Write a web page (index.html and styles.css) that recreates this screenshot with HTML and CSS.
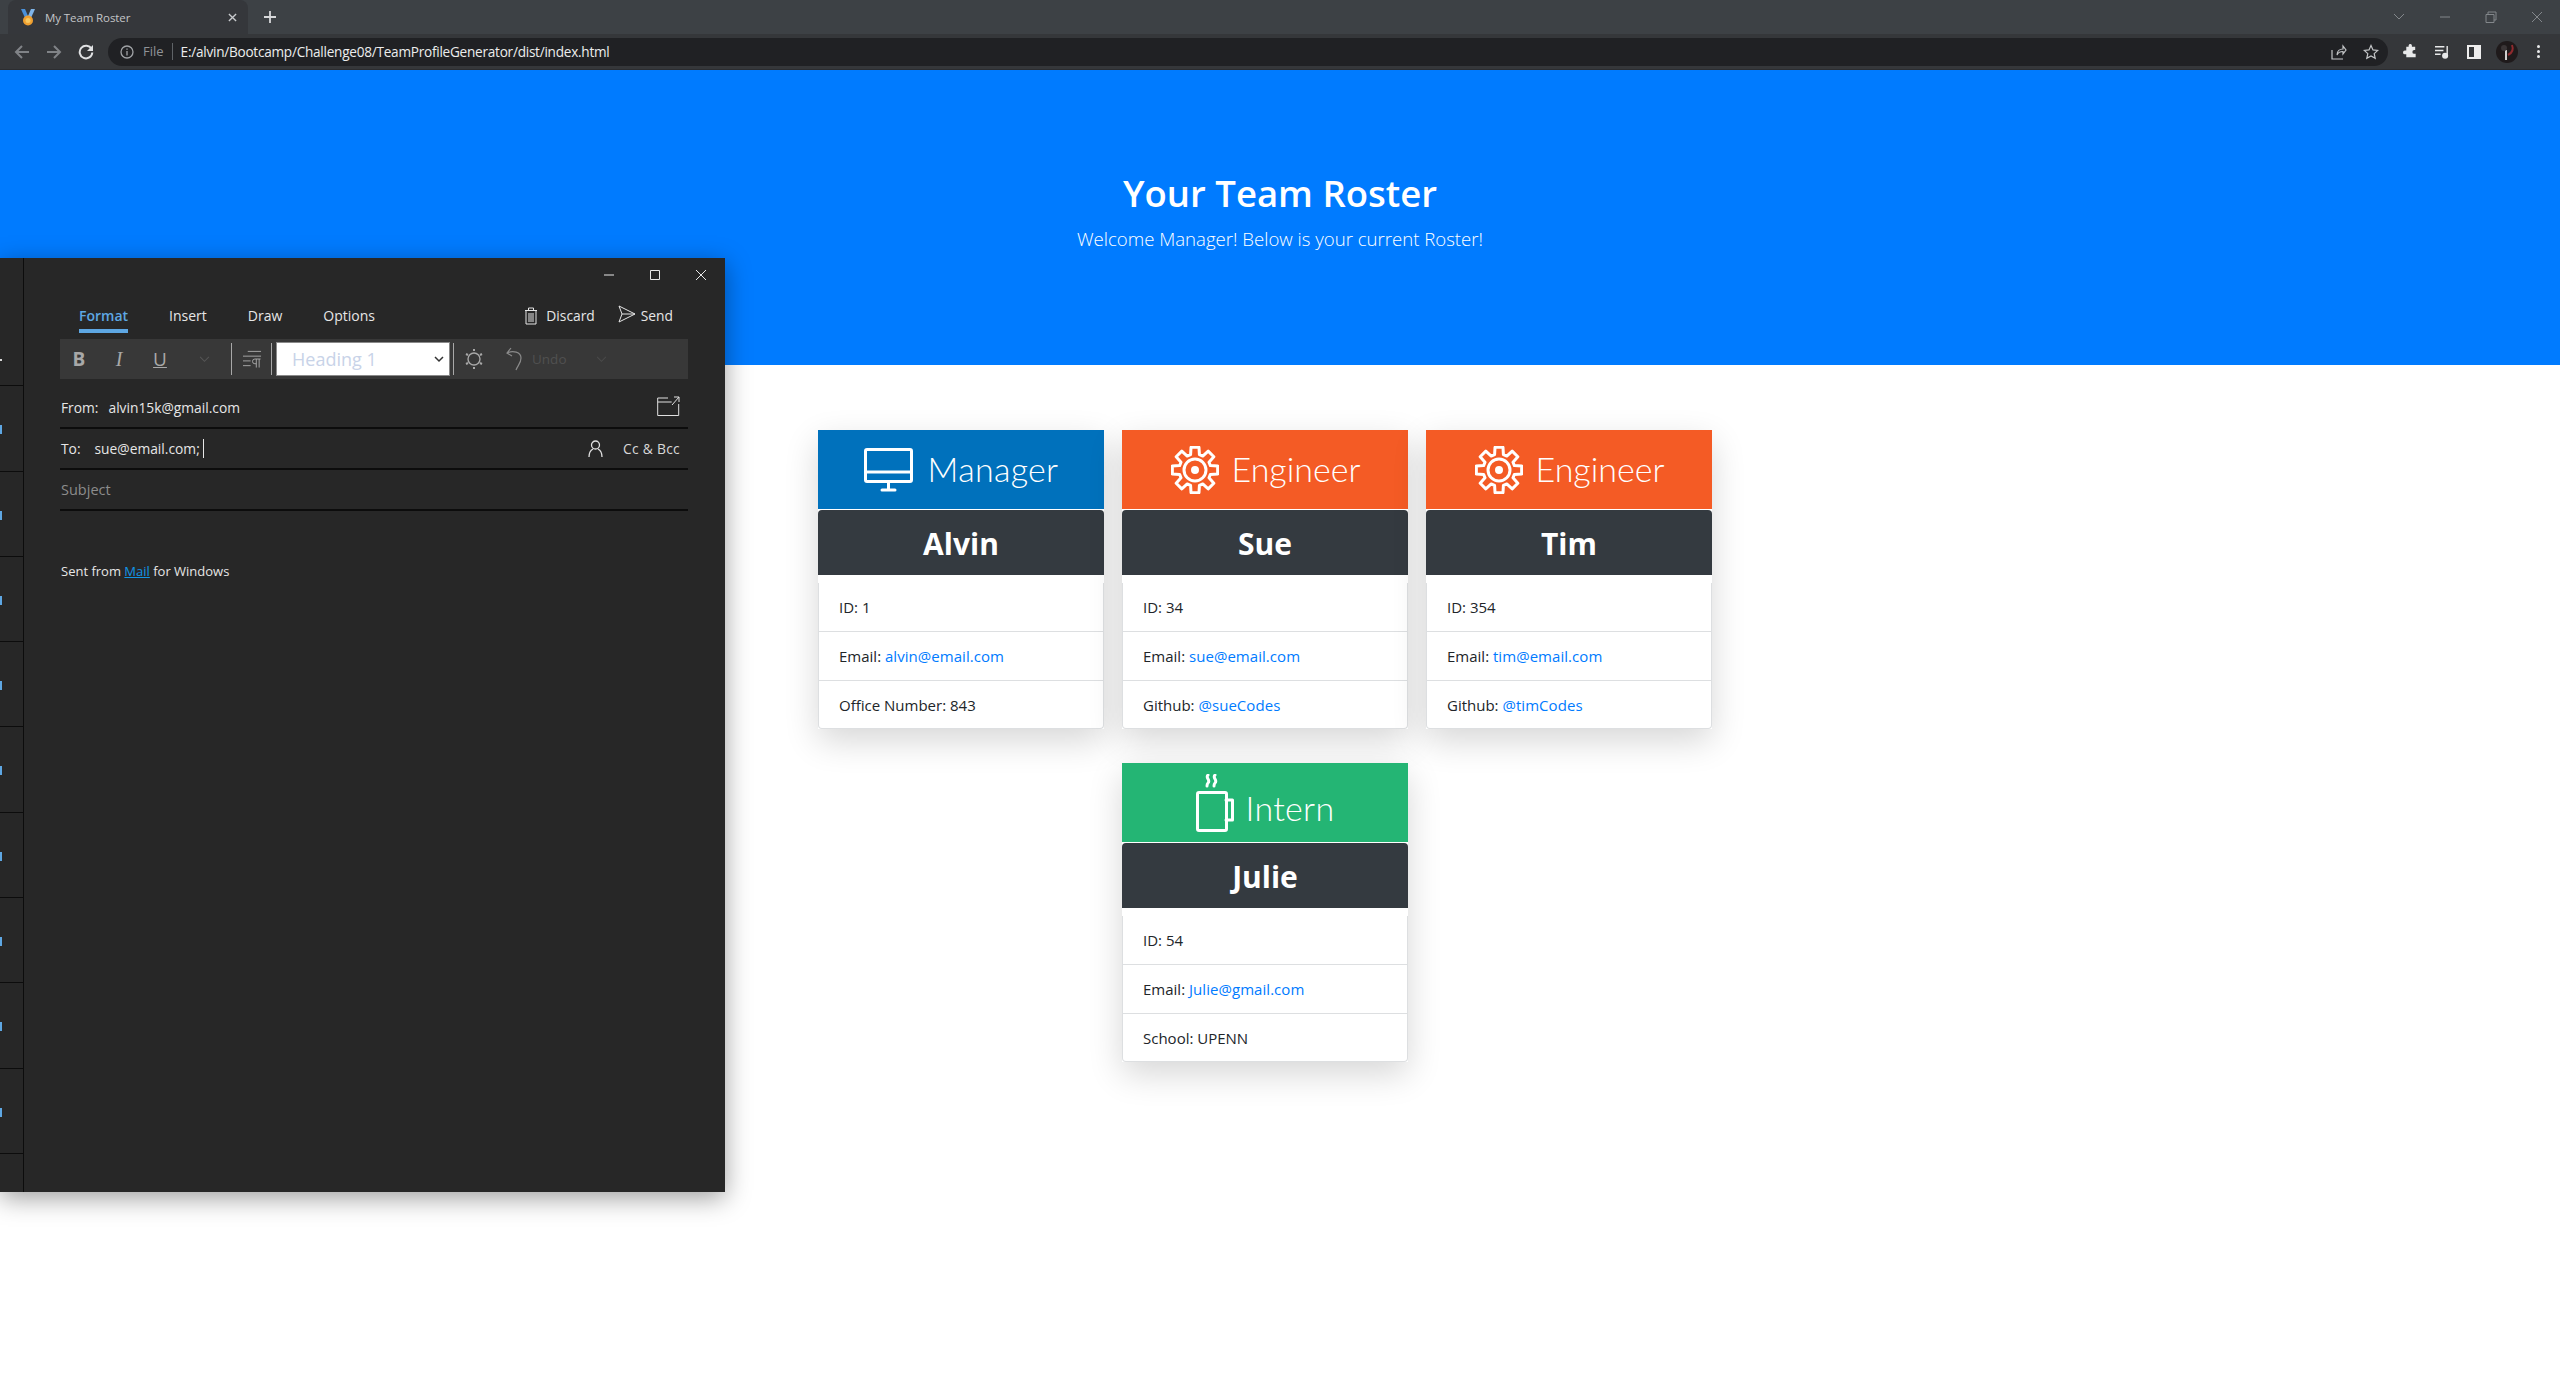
FILE: index.html
```html
<!DOCTYPE html>
<html lang="en">
<head>
    <meta charset="UTF-8">
    <title>My Team Roster</title>
    <link rel="stylesheet" href="styles.css">
</head>
<body>
    <!-- Browser frame -->
    <div class="tabstrip">
        <div class="tab">
            <svg class="favicon" viewBox="0 0 16 17"><path d="M1 0h4l3 7-3 2z" fill="#4a90d9"/><path d="M15 0h-4L8 7l3 2z" fill="#7fb4e8"/><circle cx="8" cy="11.5" r="5" fill="#f0a030"/><circle cx="8" cy="11.5" r="2.5" fill="#f8c860"/></svg>
            <span class="tab-title">My Team Roster</span>
            <svg class="tab-close" viewBox="0 0 10 10"><path d="M1 1l8 8M9 1l-8 8"/></svg>
        </div>
        <svg class="tab-new" viewBox="0 0 12 12"><path d="M6 0v12M0 6h12"/></svg>
        <div class="winctl">
            <svg viewBox="0 0 12 8"><path d="M1 1l5 5 5-5"/></svg>
            <svg viewBox="0 0 12 12"><path d="M1 6h10"/></svg>
            <svg viewBox="0 0 12 12"><path d="M1 3.500h8v8H1zM3 3.500V1h8v8H9"/></svg>
            <svg viewBox="0 0 12 12"><path d="M1 1l10 10M11 1L1 11"/></svg>
        </div>
    </div>
    <div class="toolbar">
        <svg class="nav nav-off" viewBox="0 0 16 16"><path d="M15 8H2M8 2L2 8l6 6"/></svg>
        <svg class="nav nav-off" viewBox="0 0 16 16"><path d="M1 8h13M8 2l6 6-6 6"/></svg>
        <svg class="nav" viewBox="0 0 16 16"><path d="M13.500 5A6.300 6.300 0 1 0 14.300 8.500"/><path class="nav-fill" d="M15 1v6H9z"/></svg>
        <div class="omnibox">
            <svg class="info" viewBox="0 0 14 14"><circle cx="7" cy="7" r="6"/><path d="M7 6v4.500M7 3.500v1.200"/></svg>
            <span class="scheme">File</span>
            <span class="url">E:/alvin/Bootcamp/Challenge08/TeamProfileGenerator/dist/index.html</span>
            <svg class="omni-icon omni-share" viewBox="0 0 16 16"><path d="M1 6v9h11M6 11c0-4 3-6 6-6V2l3 4-3 4V7.500c-3 0-5 1-6 3.500z"/></svg>
            <svg class="omni-icon" viewBox="0 0 16 16"><path d="M8 1.500l2 4.400 4.700.5-3.500 3.200 1 4.700L8 12l-4.200 2.300 1-4.700L1.300 6.400 6 5.900z"/></svg>
        </div>
        <svg class="ext" viewBox="0 0 16 16"><path d="M6 1.500a1.800 1.800 0 0 1 3.500 0V3H13v3.500h-1a2 2 0 0 0 0 4h1.500V14H3.500v-3H2a2 2 0 0 1 0-4h1.500V3H6z"/></svg>
        <svg class="ext ext-queue" viewBox="0 0 16 16"><path d="M0 3h10M0 7h9M0 11h6"/><path d="M13 2v10"/><circle class="ext-dot" cx="10.800" cy="12.500" r="2.500"/></svg>
        <div class="panel-btn"><span></span></div>
        <svg class="avatar" viewBox="0 0 22 22"><circle cx="11" cy="11" r="11" fill="#1f1a1b"/><path d="M16 4c2 5 0 8-4 10" stroke="#8f2a2e" stroke-width="2"/><path d="M9 9h2v10H9z" fill="#cfcfcf"/><circle cx="8" cy="7" r="3" fill="#3a3536"/></svg>
        <div class="kebab"><i></i><i></i><i></i></div>
    </div>

    <!-- Page -->
    <header class="hero">
        <h1>Your Team Roster</h1>
        <p>Welcome Manager! Below is your current Roster!</p>
    </header>

    <section class="roster">
        <article class="card">
            <div class="role role-manager">
                <svg class="role-icon" width="49" height="44" viewBox="0 0 49 44"><rect x="1.500" y="1.500" width="46" height="32" rx="1.500"/><path d="M2 24h45M24.500 34v8M18 42h13"/></svg>
                <span>Manager</span>
            </div>
            <h2>Alvin</h2>
            <ul class="facts">
                <li>ID: 1</li>
                <li>Email: <a href="#">alvin@email.com</a></li>
                <li>Office Number: 843</li>
            </ul>
        </article>
        <article class="card">
            <div class="role role-engineer">
                <svg class="role-icon" width="48" height="48" viewBox="-24 -24 48 48"><use href="#gear"/></svg>
                <span>Engineer</span>
            </div>
            <h2>Sue</h2>
            <ul class="facts">
                <li>ID: 34</li>
                <li>Email: <a href="#">sue@email.com</a></li>
                <li>Github: <a href="#">@sueCodes</a></li>
            </ul>
        </article>
        <article class="card">
            <div class="role role-engineer">
                <svg class="role-icon" width="48" height="48" viewBox="-24 -24 48 48"><use href="#gear"/></svg>
                <span>Engineer</span>
            </div>
            <h2>Tim</h2>
            <ul class="facts">
                <li>ID: 354</li>
                <li>Email: <a href="#">tim@email.com</a></li>
                <li>Github: <a href="#">@timCodes</a></li>
            </ul>
        </article>
        <article class="card">
            <div class="role role-intern">
                <svg class="role-icon" width="38" height="58" viewBox="0 0 38 58"><rect x="1.500" y="18.500" width="29" height="38" rx="1.500"/><path d="M30 26h6.500v20H30M12 1c-3 3 3 5 0 8-1 1-1 2-1 3M19 1c-3 3 3 5 0 8-1 1-1 2-1 3"/></svg>
                <span class="role-low">Intern</span>
            </div>
            <h2>Julie</h2>
            <ul class="facts">
                <li>ID: 54</li>
                <li>Email: <a href="#">Julie@gmail.com</a></li>
                <li>School: UPENN</li>
            </ul>
        </article>
    </section>

    <svg class="defs" width="0" height="0">
        <g id="gear">
            <polygon points="-4.41,-15.38 -3.99,-22.65 3.99,-22.65 4.41,-15.38 7.76,-13.99 13.19,-18.84 18.84,-13.19 13.99,-7.76 15.38,-4.41 22.65,-3.99 22.65,3.99 15.38,4.41 13.99,7.76 18.84,13.19 13.19,18.84 7.76,13.99 4.41,15.38 3.99,22.65 -3.99,22.65 -4.41,15.38 -7.76,13.99 -13.19,18.84 -18.84,13.19 -13.99,7.76 -15.38,4.41 -22.65,3.99 -22.65,-3.99 -15.38,-4.41 -13.99,-7.76 -18.84,-13.19 -13.19,-18.84 -7.76,-13.99"/>
            <circle r="11"/>
            <circle r="2.500" fill="#fff"/>
        </g>
    </svg>

    <!-- Mail compose window floating over the page -->
    <div class="mail">
        <div class="mail-list">
            <div class="mail-item"><i class="mail-dot"></i></div>
            <div class="mail-item"><i class="mail-mark"></i></div>
            <div class="mail-item"><i class="mail-mark"></i></div>
            <div class="mail-item"><i class="mail-mark"></i></div>
            <div class="mail-item"><i class="mail-mark"></i></div>
            <div class="mail-item"><i class="mail-mark"></i></div>
            <div class="mail-item"><i class="mail-mark"></i></div>
            <div class="mail-item"><i class="mail-mark"></i></div>
            <div class="mail-item"><i class="mail-mark"></i></div>
            <div class="mail-item"><i class="mail-mark"></i></div>
            <div class="mail-item"><i class="mail-mark"></i></div>
        </div>
        <div class="compose">
            <div class="mail-title">
                <svg viewBox="0 0 12 12"><path d="M1 6h10"/></svg>
                <svg viewBox="0 0 12 12"><path d="M1.500 1.500h9v9h-9z"/></svg>
                <svg viewBox="0 0 12 12"><path d="M1 1l10 10M11 1L1 11"/></svg>
            </div>
            <nav class="mail-tabs">
                <a class="mail-tab active" href="#">Format</a>
                <a class="mail-tab" href="#">Insert</a>
                <a class="mail-tab" href="#">Draw</a>
                <a class="mail-tab" href="#">Options</a>
                <span class="mail-action mail-action-first">
                    <svg viewBox="0 0 14 18"><path d="M1 3.500h12M4.500 3.500V1h5v2.500M2 3.500h10v13.500H2zM5 6v9M7 6v9M9 6v9"/></svg>
                    Discard
                </span>
                <span class="mail-action">
                    <svg viewBox="0 0 18 18"><path d="M1 1l16 8-16 8 3-8zM4 9h13"/></svg>
                    Send
                </span>
            </nav>
            <div class="format-bar">
                <span class="fmt fmt-b">B</span>
                <span class="fmt fmt-i">I</span>
                <span class="fmt fmt-u">U</span>
                <svg class="fmt-chev" viewBox="0 0 12 8"><path d="M1 1l5 5 5-5"/></svg>
                <i class="fmt-sep fmt-sep-a"></i>
                <svg class="fmt-para" viewBox="0 0 20 20"><path d="M5 2h14M0 7h19M0 12h8M0 17h8M14 10v9M17 10v9M18.500 10h-6a2.500 2.500 0 0 0 0 5h1.500"/></svg>
                <i class="fmt-sep fmt-sep-b"></i>
                <div class="heading-select">
                    <span>Heading 1</span>
                    <svg viewBox="0 0 10 7"><path d="M1 1l4 4 4-4"/></svg>
                </div>
                <i class="fmt-sep fmt-sep-c"></i>
                <svg class="fmt-sun" viewBox="0 0 18 20"><circle cx="9" cy="10" r="6"/><path d="M9 0v2M9 18v2M1 5l2 1M15 14l2 1M1 15l2-1M15 6l2-1" stroke-width="2"/></svg>
                <svg class="fmt-undo" viewBox="0 0 16 24"><path d="M5 1L1 6l5 3M1 6c6-3 14-1 14 5 0 5-3 7-5 12"/></svg>
                <span class="fmt-undo-label">Undo</span>
                <svg class="fmt-chev fmt-chev-undo" viewBox="0 0 12 8"><path d="M1 1l5 5 5-5"/></svg>
            </div>
            <div class="field field-from">
                <span class="field-label">From:</span>
                <span class="field-value">alvin15k@gmail.com</span>
                <svg class="popout" viewBox="0 0 23 20"><path d="M11 2H.700v17.500h21V8M.700 6h14M15 9l7-8M17 1h5v5"/></svg>
            </div>
            <div class="field field-to">
                <span class="field-label">To:</span>
                <span class="field-value">sue@email.com;</span><i class="caret"></i>
                <svg class="person" viewBox="0 0 15 17"><circle cx="7.500" cy="5" r="4"/><path d="M1 17c0-4 2-7 4-8M14 17c0-4-2-7-4-8"/></svg>
                <span class="cc">Cc &amp; Bcc</span>
            </div>
            <div class="field field-subject">Subject</div>
            <p class="signature">Sent from <a href="#">Mail</a> for Windows</p>
        </div>
    </div>
</body>
</html>
```

FILE: styles.css
```css
* {
    box-sizing: border-box;
}

html, body {
    height: 100%;
}

body {
    margin: 0;
    overflow: hidden;
    position: relative;
    background-color: white;
    color: #212529;
    font-family: "Open Sans", "Noto Sans", sans-serif;
}

svg {
    fill: none;
    flex: none;
}

/* browser frame */
.tabstrip {
    display: flex;
    align-items: center;
    height: 34px;
    background-color: #3d4145;
    padding-left: 8px;
}

.tab {
    display: flex;
    align-items: center;
    width: 240px;
    height: 34px;
    padding: 0 11px 0 12px;
    background-color: #35373b;
    border-radius: 8px 8px 0 0;
}

.favicon {
    width: 16px;
    height: 17px;
}

.tab-title {
    margin-left: 9px;
    flex: 1;
    font-size: 11.500px;
    letter-spacing: -0.100px;
    color: #c3c5c8;
}

.tab-close {
    width: 9px;
    height: 9px;
    stroke: #c9cbce;
    stroke-width: 1.500;
}

.tab-new {
    width: 12px;
    height: 12px;
    margin-left: 16px;
    stroke: #d7d8da;
    stroke-width: 1.800;
}

.winctl {
    margin-left: auto;
    display: flex;
    align-items: center;
    gap: 34px;
    padding-right: 17px;
}

.winctl svg {
    width: 12px;
    height: 12px;
    stroke: #83878b;
    stroke-width: 1;
}

.toolbar {
    display: flex;
    align-items: center;
    height: 36px;
    padding: 0 0 0 14px;
    background-color: #35373a;
    border-bottom: 1px solid #2c2d30;
}

.nav {
    width: 16px;
    height: 16px;
    margin-right: 16px;
    stroke: #e0e1e3;
    stroke-width: 2;
}

.nav-off {
    stroke: #808387;
}

.nav-fill {
    fill: #e0e1e3;
    stroke: none;
}

.omnibox {
    display: flex;
    align-items: center;
    width: 2280px;
    height: 28px;
    margin-left: -2px;
    padding: 0 9px 0 12px;
    background-color: #202124;
    border-radius: 14px;
}

.info {
    width: 14px;
    height: 14px;
    stroke: #a0a3a6;
    stroke-width: 1.300;
}

.scheme {
    margin-left: 9px;
    padding-right: 8px;
    border-right: 1px solid #5f6367;
    font-size: 13px;
    line-height: 17px;
    color: #8f9397;
}

.url {
    margin-left: 8px;
    font-size: 13.600px;
    color: #eceded;
    letter-spacing: -0.250px;
}

.omni-icon {
    width: 16px;
    height: 16px;
    margin-left: 16px;
    stroke: #c4c6c8;
    stroke-width: 1.200;
}

.omni-share {
    margin-left: auto;
}

.ext {
    width: 15px;
    height: 15px;
    margin-left: 15px;
    fill: #e8e9ea;
}

.ext-queue {
    margin-left: 17px;
    fill: none;
    stroke: #e8e9ea;
    stroke-width: 1.500;
}

.ext-dot {
    fill: #e8e9ea;
}

.panel-btn {
    display: flex;
    width: 14px;
    height: 14px;
    margin-left: 17px;
    padding: 2px;
    background-color: #eeeeee;
}

.panel-btn span {
    width: 5px;
    background-color: #35373a;
}

.avatar {
    width: 22px;
    height: 22px;
    margin-left: 15px;
}

.kebab {
    display: flex;
    flex-direction: column;
    gap: 2px;
    margin-left: 19px;
}

.kebab i {
    width: 3px;
    height: 3px;
    border-radius: 50%;
    background-color: #e8e9ea;
}

/* page */
.hero {
    height: 295px;
    padding-top: 97px;
    background-color: #007bff;
    color: white;
    text-align: center;
}

.hero h1 {
    margin: 0;
    font-size: 36.500px;
    font-weight: 600;
    line-height: 52px;
}

.hero p {
    margin: 6px 0 0;
    font-size: 18.600px;
    font-weight: 300;
    line-height: 28px;
}

.roster {
    display: flex;
    flex-wrap: wrap;
    justify-content: center;
    width: 912px;
    margin: 65px 0 0 809px;
}

.card {
    width: 286px;
    height: 299px;
    margin: 0 9px 34px;
    background-color: white;
    box-shadow: 0 12px 32px rgba(0, 0, 0, 0.16);
}

.role {
    display: flex;
    align-items: center;
    justify-content: center;
    gap: 15px;
    height: 79px;
    margin-bottom: 1px;
    color: white;
    font-family: "Lato", sans-serif;
    font-size: 34px;
    font-weight: 300;
    letter-spacing: 0.300px;
}

.role span {
    padding-bottom: 3px;
}

.role-manager {
    background-color: #0071bc;
}

.role-engineer {
    gap: 13px;
    padding-left: 1px;
    letter-spacing: 0;
    background-color: #f45b25;
}

.role-intern {
    gap: 12px;
    background-color: #24b574;
}

.role .role-low {
    padding-top: 9px;
    padding-bottom: 0;
}

.role-icon {
    stroke: white;
    stroke-width: 3;
    stroke-linejoin: round;
    stroke-linecap: round;
}

.card h2 {
    height: 65px;
    margin: 0;
    background-color: #343a40;
    border-radius: 4px 4px 0 0;
    color: white;
    font-size: 30px;
    font-weight: 700;
    line-height: 67px;
    text-align: center;
}

.facts {
    height: 146px;
    margin: 8px 0 0;
    padding: 0;
    list-style: none;
    border: 1px solid #dddfe1;
    border-top: 0;
    border-radius: 0 0 4px 4px;
}

.facts li {
    height: 49px;
    padding-left: 20px;
    border-bottom: 1px solid #dddfe1;
    font-size: 15px;
    line-height: 48px;
}

.facts li:last-child {
    height: 47px;
    border-bottom: 0;
}

.facts a {
    color: #007bff;
    text-decoration: none;
    letter-spacing: 0.050px;
}

.defs {
    position: absolute;
}

/* mail window */
.mail {
    position: absolute;
    left: 0;
    top: 258px;
    display: flex;
    width: 725px;
    height: 934px;
    background-color: #272727;
    box-shadow: 0 6px 24px rgba(0, 0, 0, 0.38);
    color: #e6e6e6;
}

.mail-list {
    width: 24px;
    flex: none;
    padding-top: 43px;
    border-right: 1px solid #0c0c0c;
    overflow: hidden;
}

.mail-item {
    position: relative;
    height: 85.300px;
    border-bottom: 1px solid #0c0c0c;
}

.mail-dot {
    position: absolute;
    left: 0;
    top: 58px;
    width: 2px;
    height: 2px;
    background-color: #d8d8d8;
}

.mail-mark {
    position: absolute;
    left: 0;
    top: 39px;
    width: 2px;
    height: 9px;
    background-color: #5ea7e3;
}

.compose {
    flex: 1;
    padding: 0 37px 0 36px;
}

.mail-title {
    display: flex;
    justify-content: flex-end;
    align-items: center;
    gap: 34px;
    height: 34px;
    margin-right: -19px;
}

.mail-title svg {
    width: 12px;
    height: 12px;
    stroke: #e8e8e8;
    stroke-width: 1;
}

.mail-tabs {
    display: flex;
    height: 41px;
    padding-left: 19px;
    font-size: 14px;
}

.mail-tab {
    height: 41px;
    margin-right: 41px;
    padding-top: 14px;
    color: #e6e6e6;
    text-decoration: none;
}

.mail-tab.active {
    color: #5ea7e3;
    font-weight: 600;
    border-bottom: 4px solid #5ea7e3;
}

.mail-action {
    display: flex;
    align-items: flex-start;
    gap: 8px;
    padding-top: 14px;
    margin-left: 23px;
    font-size: 13.800px;
}

.mail-action-first {
    margin-left: auto;
}

.mail-action:last-child {
    margin-right: 15px;
}

.mail-action svg {
    width: 14px;
    height: 18px;
    margin-top: 1px;
    stroke: #e6e6e6;
    stroke-width: 1;
}

.mail-action:last-child svg {
    width: 18px;
    margin-top: -1px;
    margin-right: -3px;
}

.format-bar {
    display: flex;
    align-items: center;
    height: 40px;
    margin-top: 6px;
    background-color: #383838;
}

.fmt {
    width: 16px;
    color: #a8a8a8;
    font-size: 19px;
    line-height: 24px;
    text-align: center;
}

.fmt-b {
    margin-left: 11px;
    font-weight: 700;
}

.fmt-i {
    margin-left: 24px;
    font-family: "Liberation Serif", serif;
    font-style: italic;
    font-size: 20px;
}

.fmt-u {
    margin-left: 25px;
    text-decoration: underline;
    font-weight: 400;
}

.fmt-chev {
    width: 11px;
    height: 7px;
    margin-left: 31px;
    stroke: #555555;
    stroke-width: 1.200;
}

.fmt-sep {
    width: 1px;
    height: 32px;
    background-color: #a8a8a8;
}

.fmt-sep-a {
    margin-left: 21px;
}

.fmt-sep-b {
    margin-left: 9px;
}

.fmt-sep-c {
    margin-left: 3px;
}

.fmt-para {
    width: 19px;
    height: 20px;
    margin-left: 11px;
    stroke: #a8a8a8;
    stroke-width: 1;
}

.heading-select {
    display: flex;
    align-items: center;
    justify-content: space-between;
    width: 174px;
    height: 34px;
    margin-left: 4px;
    padding: 0 5px 0 15px;
    background-color: white;
    border: 1px solid #8a8a8a;
    color: #c8d3e8;
    font-size: 18px;
}

.heading-select svg {
    width: 10px;
    height: 7px;
    stroke: #333333;
    stroke-width: 1.500;
}

.fmt-sun {
    width: 18px;
    height: 20px;
    margin-left: 11px;
    stroke: #a8a8a8;
    stroke-width: 1.400;
}

.fmt-undo {
    width: 16px;
    height: 24px;
    margin-left: 23px;
    stroke: #8a8a8a;
    stroke-width: 1.200;
}

.fmt-undo-label {
    margin-left: 10px;
    color: #505050;
    font-size: 13.500px;
}

.fmt-chev-undo {
    margin-left: 29px;
    stroke: #4a4a4a;
}

.field {
    display: flex;
    align-items: center;
    height: 41px;
    border-bottom: 2px solid #0c0c0c;
    font-size: 13.800px;
}

.field-from {
    margin-top: 9px;
}

.field-label {
    padding-left: 1px;
    color: #e6e6e6;
}

.field-from .field-value {
    margin-left: 10px;
}

.field-to .field-value {
    margin-left: 14px;
}

.popout {
    width: 23px;
    height: 20px;
    margin: -4px 8px 0 auto;
    stroke: #e0e0e0;
    stroke-width: 1;
}

.caret {
    width: 1px;
    height: 19px;
    margin-left: 3px;
    background-color: #e6e6e6;
}

.person {
    width: 15px;
    height: 17px;
    margin-left: auto;
    stroke: #e0e0e0;
    stroke-width: 1.300;
}

.cc {
    margin: 0 8px 0 20px;
    color: #d8d8d8;
    letter-spacing: 0.300px;
}

.field-subject {
    padding-left: 1px;
    color: #8c8c8c;
    font-size: 14.500px;
}

.signature {
    margin: 51px 0 0 1px;
    font-size: 13px;
    line-height: 18px;
}

.signature a {
    color: #1295e6;
}
```
